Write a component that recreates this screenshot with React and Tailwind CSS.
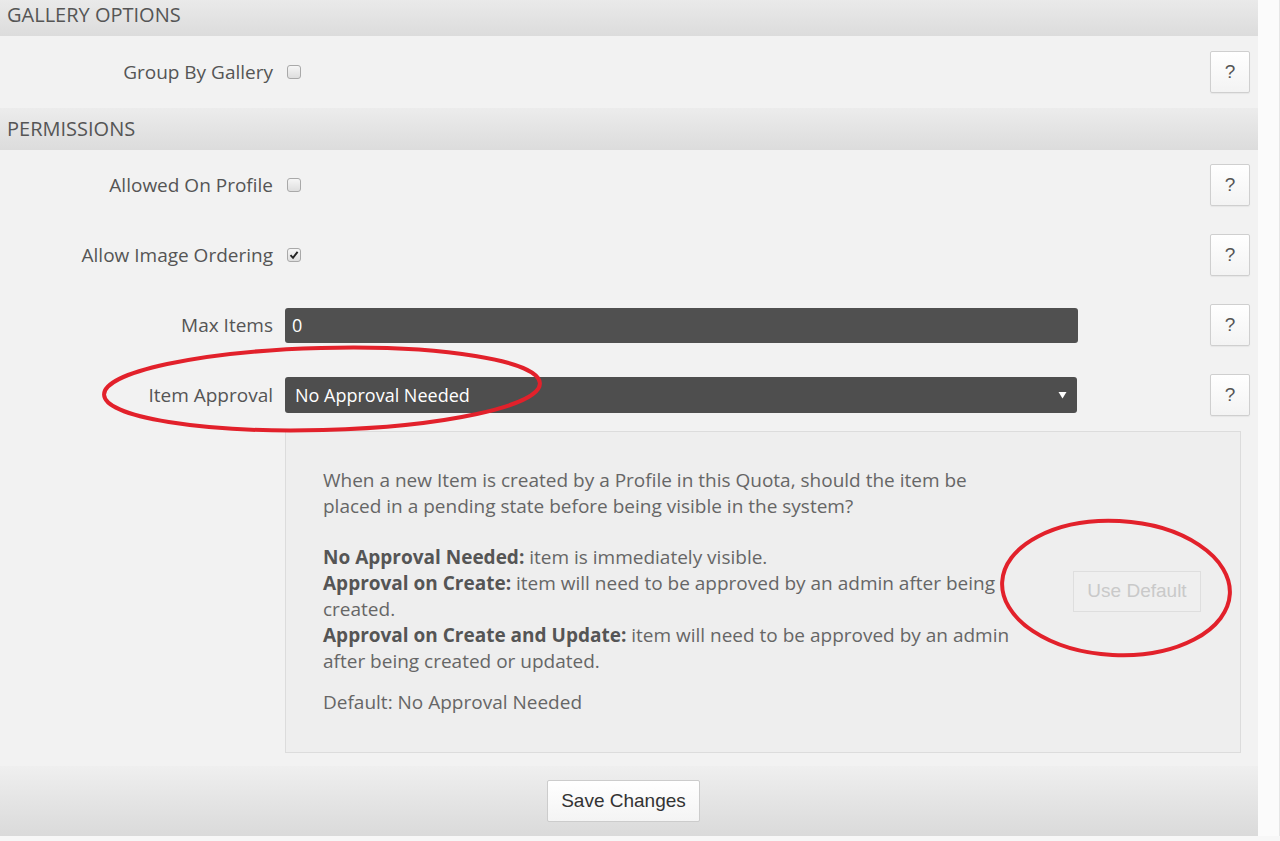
import React from 'react';

const font = { fontFamily: '"Open Sans", "Liberation Sans", sans-serif' };

const HelpButton = () => (
  <button className="w-[40px] h-[42px] mr-[8px] rounded-[2px] border border-[#cfcfcf] bg-gradient-to-b from-white to-[#f3f3f3] text-[19px] text-[#555] font-['Liberation_Sans',sans-serif] shadow-[0_1px_1px_rgba(0,0,0,0.05)]">
    ?
  </button>
);

const Checkbox = ({ checked }) => (
  <span className="w-[14px] h-[14px] ml-[2px] rounded-[3px] border border-[#a9a9a9] bg-gradient-to-b from-[#f6f6f6] to-[#dedede] flex items-center justify-center">
    {checked && (
      <svg width="10" height="10" viewBox="0 0 10 10">
        <path d="M1.5 5.2 L4 7.8 L8.6 1.8" fill="none" stroke="#222" strokeWidth="1.9" />
      </svg>
    )}
  </span>
);

const SectionHeader = ({ children }) => (
  <div className="h-[42px] flex items-center pl-[7px] bg-gradient-to-b from-[#ececec] to-[#dcdcdc] text-[20px] text-[#555]">
    {children}
  </div>
);

const Row = ({ label, children, tall }) => (
  <div className={`flex items-center ${tall ? 'py-[15px]' : 'py-[14px]'}`}>
    <div className="w-[273px] text-right text-[19px] text-[#555]">{label}</div>
    <div className="ml-[12px] w-[793px] flex items-center">{children}</div>
    <div className="flex-1" />
    <HelpButton />
  </div>
);

export default function App() {
  return (
    <div style={font} className="relative w-[1280px] h-[841px] overflow-hidden bg-[#f7f7f7]">
      <div className="flex -mt-[6px]">
        <div className="w-[1258px] bg-[#f2f2f2]">
          <SectionHeader>GALLERY OPTIONS</SectionHeader>
          <Row label="Group By Gallery" tall>
            <Checkbox />
          </Row>

          <SectionHeader>PERMISSIONS</SectionHeader>
          <Row label="Allowed On Profile">
            <Checkbox />
          </Row>
          <Row label="Allow Image Ordering">
            <Checkbox checked />
          </Row>
          <Row label="Max Items">
            <div className="w-full h-[35px] rounded-[3px] bg-[#505050] text-white text-[18px] pl-[7px] flex items-center">0</div>
          </Row>
          <Row label="Item Approval">
            <div className="w-[792px] h-[36px] rounded-[3px] bg-[#4e4e4e] text-white text-[18px] pl-[10px] pr-[10px] flex items-center justify-between">
              <span>No Approval Needed</span>
              <svg width="9" height="8" viewBox="0 0 9 8">
                <path d="M0.5 1 L8.5 1 L4.5 7.5 Z" fill="#fff" />
              </svg>
            </div>
          </Row>

          <div className="ml-[285px] mr-[17px] mt-[1px] border border-[#dcdcdc] bg-[#eeeeee] flex items-center pl-[37px] pt-[35px] pb-[37px]">
            <div className="w-[695px] text-[19px] leading-[26px] text-[#666]">
              <p>When a new Item is created by a Profile in this Quota, should the item be placed in a pending state before being visible in the system?</p>
              <p className="mt-[25px]">
                <b className="text-[#555]">No Approval Needed:</b> item is immediately visible.
                <br />
                <b className="text-[#555]">Approval on Create:</b> item will need to be approved by an admin after being created.
                <br />
                <b className="text-[#555]">Approval on Create and Update:</b> item will need to be approved by an admin after being created or updated.
              </p>
              <p className="mt-[15px]">Default: No Approval Needed</p>
            </div>
            <div className="flex-1 flex justify-end pr-[39px]">
              <button className="w-[128px] h-[41px] border border-[#dedede] bg-[#efefef] text-[19px] text-[#c9c9c9] font-['Liberation_Sans',sans-serif]">
                Use Default
              </button>
            </div>
          </div>

          <div className="h-[13px]" />
          <div className="h-[70px] flex items-center justify-center pr-[11px] bg-gradient-to-b from-[#efefef] to-[#dadada]">
            <button className="w-[153px] h-[42px] rounded-[2px] border border-[#cccccc] bg-gradient-to-b from-white to-[#f4f4f4] text-[19px] text-[#333] font-['Liberation_Sans',sans-serif]">
              Save Changes
            </button>
          </div>
        </div>
        <div className="w-[22px] bg-[#fbfbfb] border-r border-[#e6e6e6]" />
      </div>

      <svg className="absolute inset-0 pointer-events-none" width="1280" height="841">
        <ellipse cx="322" cy="389" rx="218" ry="41" transform="rotate(-1.5 322 389)" fill="none" stroke="#e2212b" strokeWidth="4" />
        <ellipse cx="1116" cy="588" rx="114" ry="67" transform="rotate(3 1116 588)" fill="none" stroke="#e2212b" strokeWidth="4" />
      </svg>
    </div>
  );
}
